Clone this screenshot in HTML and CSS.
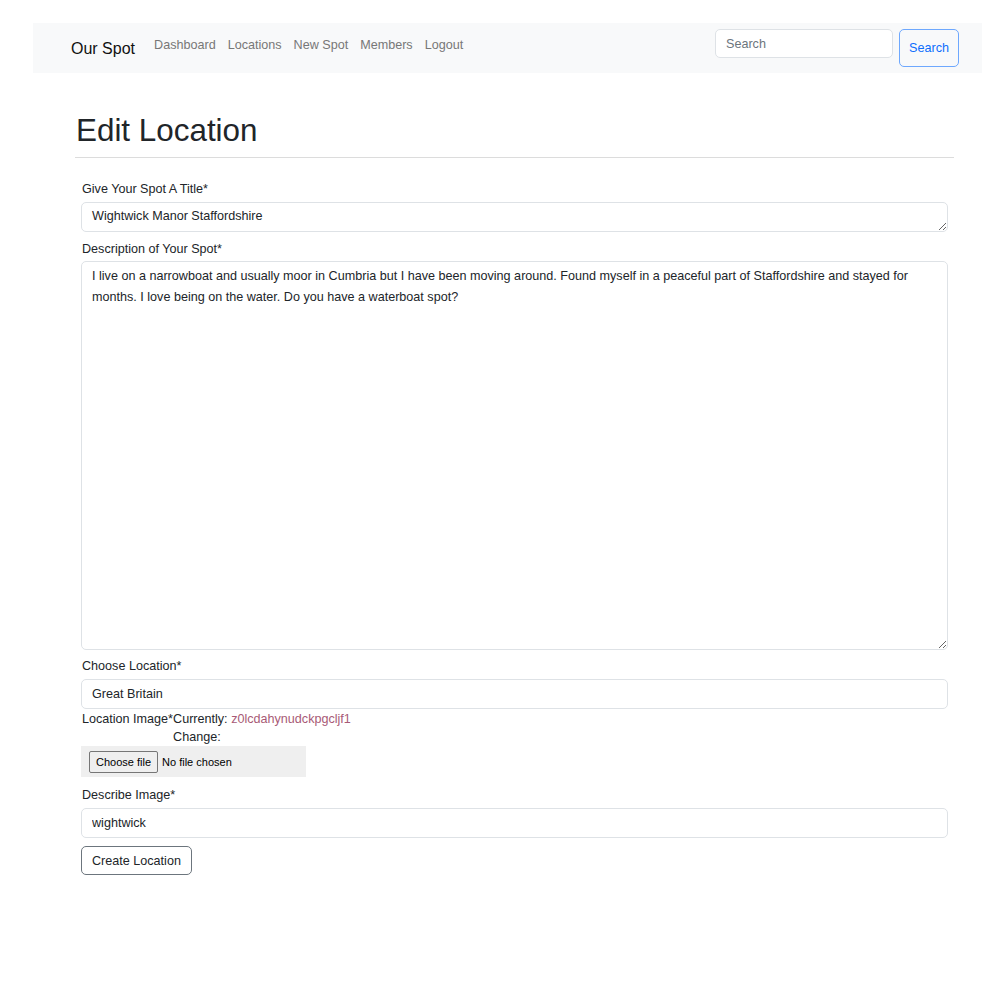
FILE: index.html
```html
<!DOCTYPE html>
<html lang="en">
<head>
<meta charset="utf-8">
<title>Edit Location</title>
<link rel="stylesheet" href="styles.css">
</head>
<body>
<nav class="navbar">
  <a class="brand" href="#">Our Spot</a>
  <ul class="nav-links">
    <li><a href="#">Dashboard</a></li>
    <li><a href="#">Locations</a></li>
    <li><a href="#">New Spot</a></li>
    <li><a href="#">Members</a></li>
    <li><a href="#">Logout</a></li>
  </ul>
  <form class="search">
    <input class="search-input" type="search" placeholder="Search">
    <button class="search-btn" type="button">Search</button>
  </form>
</nav>
<main class="container">
  <h1 class="title">Edit Location</h1>
  <hr class="rule">
  <form class="form">
    <label class="label">Give Your Spot A Title*</label>
    <textarea class="field field-title">Wightwick Manor Staffordshire</textarea>
    <label class="label">Description of Your Spot*</label>
    <textarea class="field field-desc">I live on a narrowboat and usually moor in Cumbria but I have been moving around. Found myself in a peaceful part of Staffordshire and stayed for months. I love being on the water. Do you have a waterboat spot?</textarea>
    <label class="label">Choose Location*</label>
    <input class="field field-input" type="text" value="Great Britain">
    <div class="image-row"><label class="label-inline">Location Image*</label><span class="current">Currently: <a class="current-link" href="#">z0lcdahynudckpgcljf1</a><br>Change:</span></div>
    <div class="file-box"><span class="file-btn">Choose file</span><span class="file-text">No file chosen</span></div>
    <label class="label">Describe Image*</label>
    <input class="field field-input" type="text" value="wightwick">
    <button class="submit" type="button">Create Location</button>
  </form>
</main>
</body>
</html>
```
FILE: styles.css
```css
* { box-sizing: border-box; }
body {
  margin: 0;
  font-family: "Liberation Sans", Arial, sans-serif;
  font-size: 12.6px;
  line-height: 1.5;
  color: #212529;
  background: #fff;
}
.navbar {
  margin: 23px 0 0 33px;
  height: 50px;
  background: #f8f9fa;
  display: flex;
  align-items: center;
  padding: 0 23px 0 38px;
}
.brand {
  font-size: 16px;
  color: #111;
  text-decoration: none;
  margin-right: 19px;
  margin-top: 2px;
}
.nav-links {
  list-style: none;
  display: flex;
  margin: 0;
  padding: 0;
  gap: 12px;
  margin-top: -6px;
}
.nav-links a {
  color: #777;
  text-decoration: none;
  font-size: 12.6px;
}
.search {
  margin-left: auto;
  display: flex;
  align-items: flex-start;
  gap: 6px;
  align-self: flex-start;
  margin-top: 6px;
}
.search-input {
  width: 178px;
  height: 29px;
  border: 1px solid #dee2e6;
  border-radius: 5px;
  padding: 0 10px;
  font-family: inherit;
  font-size: 12.6px;
  background: #fff;
}
.search-input::placeholder { color: #6c757d; }
.search-btn {
  width: 60px;
  height: 38px;
  border: 1px solid #6ea8fe;
  border-radius: 5px;
  background: transparent;
  color: #0d6efd;
  font-family: inherit;
  font-size: 12.6px;
  padding: 0;
}
.container {
  margin: 0 28px 0 75px;
}
.title {
  font-size: 31.4px;
  font-weight: 400;
  margin: 39px 0 0 1px;
  line-height: 1.2;
}
.rule {
  border: 0;
  border-top: 1px solid #dcdcdc;
  margin: 7px 0 0 0;
}
.form {
  display: flex;
  flex-direction: column;
  align-items: flex-start;
  padding: 0 6px;
  margin-top: 22px;
}
.label {
  display: block;
  margin-bottom: 3px;
  margin-left: 1px;
}
.field {
  width: 100%;
  border: 1px solid #dee2e6;
  border-radius: 5px;
  font-family: inherit;
  font-size: 12.6px;
  color: #212529;
  padding: 5px 10px;
  margin-bottom: 7px;
  line-height: 1.6;
}
.field-title { height: 30px; margin-bottom: 8px; resize: vertical; overflow: hidden; line-height: 1.5; padding-top: 4px; }
.field-desc { height: 389px; resize: vertical; line-height: 21px; padding-top: 4px; }
.field-input { height: 30px; margin-bottom: 1px; }
.image-row { margin-left: 1px; line-height: 18px; }
.label-inline { vertical-align: top; }
.current { display: inline-block; vertical-align: top; }
.current-link { color: #a85a76; text-decoration: none; }
.file-box {
  width: 225px;
  height: 31px;
  background: #efefef;
  display: flex;
  align-items: center;
  padding-left: 8px;
  margin-bottom: 9px;
  font-size: 11px;
}
.file-btn {
  border: 1px solid #767676;
  border-radius: 2px;
  background: #efefef;
  padding: 2px 6px;
  color: #000;
  margin-right: 4px;
}
.file-text { color: #000; }
.submit {
  margin-top: 7px;
  height: 29px;
  padding: 0 10px;
  border: 1px solid #6c757d;
  border-radius: 5px;
  background: #fff;
  font-family: inherit;
  font-size: 12.6px;
  color: #212529;
}
```
